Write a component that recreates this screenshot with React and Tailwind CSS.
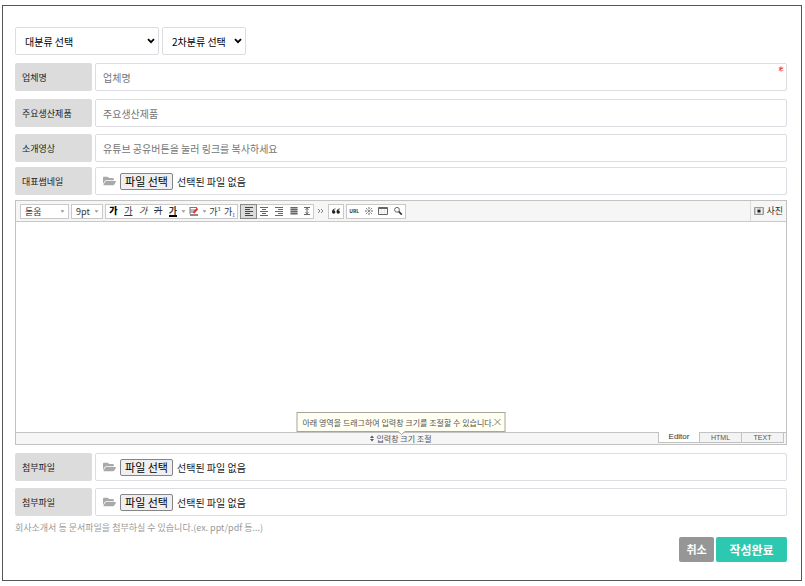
import React from "react";

function Caret() {
  return (
    <svg viewBox="0 0 5 3" className="h-[3px] w-[5px] shrink-0" aria-hidden="true">
      <path d="M0.5 0.3h4L2.5 2.7z" fill="#999" />
    </svg>
  );
}

function FolderIcon() {
  return (
    <svg viewBox="0 0 576 512" className="h-3 w-[13px] shrink-0" aria-hidden="true">
      <path
        fill="#a9a9a9"
        d="M572.7 292.1 500.3 416.200A64 64 0 0 1 445 448H45c-18.500 0-30-20-20.700-36.100l72.400-124.100A64 64 0 0 1 152 256h400c18.500 0 30 20.100 20.700 36.100zM152 224h328v-48c0-26.500-21.500-48-48-48H272l-64-64H48C21.500 64 0 85.500 0 112v278.100l69.100-118.400C86.200 242.300 118 224 152 224z"
      />
    </svg>
  );
}

function CategorySelect({ label, value, className }) {
  return (
    <div className={`grid h-7 items-center rounded-[2px] border border-[#dcdce2] bg-white ${className}`}>
      <select aria-label={label} className="col-start-1 row-start-1 h-full w-full appearance-none bg-transparent pl-[9px] text-[10px] text-black">
        <option>{value}</option>
      </select>
      <svg viewBox="0 0 8 6" className="pointer-events-none col-start-1 row-start-1 mr-[3px] h-[6px] w-2 justify-self-end" aria-hidden="true">
        <path d="m1 1.200 3 3 3-3" fill="none" stroke="#000" strokeWidth="1.800" />
      </svg>
    </div>
  );
}

function Row({ id, label, className, children }) {
  return (
    <div className={`flex h-7 gap-[3px] ${className}`}>
      <label htmlFor={id} className="flex w-[77px] shrink-0 items-center rounded-[2px] bg-[#dcdcdc] px-[7px] pt-0.5 text-[9px] text-[#222]">
        {label}
      </label>
      {children}
    </div>
  );
}

function TextField({ id, label, placeholder, required, className }) {
  return (
    <Row id={id} label={label} className={className}>
      <div className="relative flex min-w-0 flex-1">
        <input
          id={id}
          type="text"
          required={required}
          placeholder={placeholder}
          className="w-full rounded-[2px] border border-[#dcdce2] px-[7px] text-[10px] placeholder:text-[#757575]"
        />
        {required && (
          <svg viewBox="0 0 6 6" className="absolute top-[3px] right-[3px] size-[6px]" aria-hidden="true">
            <path d="M3 0.500v5M0.800 1.600l4.400 2.800M0.800 4.400l4.400-2.800" stroke="#ff3b3b" strokeWidth="1.100" />
          </svg>
        )}
      </div>
    </Row>
  );
}

function FileField({ id, label, className }) {
  return (
    <Row id={id} label={label} className={className}>
      <div className="relative flex min-w-0 flex-1 items-center rounded-[2px] border border-[#dcdce2] pl-[7px]">
        <FolderIcon />
        <input id={id} type="file" className="sr-only" />
        <label
          htmlFor={id}
          className="ml-1 flex h-[17px] w-[53px] items-center justify-center rounded-[2px] border border-[#858585] bg-[#efefef] text-[11px] whitespace-nowrap text-black"
        >
          파일 선택
        </label>
        <span className="ml-1 text-[10px] text-[#222]">선택된 파일 없음</span>
      </div>
    </Row>
  );
}

function Tool({ label, className = "w-[15px]", children }) {
  return (
    <button type="button" aria-label={label} className={`flex h-full items-center justify-center ${className}`}>
      {children}
    </button>
  );
}

function ToolGroup({ className = "", children }) {
  return <div className={`flex h-[15px] shrink-0 items-center border border-[#c9c9c9] bg-white ${className}`}>{children}</div>;
}

function Icon({ children }) {
  return (
    <svg viewBox="0 0 10 10" className="size-[10px] shrink-0" fill="none" stroke="#666" aria-hidden="true">
      {children}
    </svg>
  );
}

function ToolSelect({ label, value, className }) {
  return (
    <div className={`grid h-[15px] shrink-0 items-center border border-[#c9c9c9] bg-white ${className}`}>
      <select aria-label={label} className="col-start-1 row-start-1 h-full w-full appearance-none bg-transparent pl-1 text-[9px] leading-[13px] text-[#333]">
        <option>{value}</option>
      </select>
      <span className="pointer-events-none col-start-1 row-start-1 mr-[3px] justify-self-end">
        <Caret />
      </span>
    </div>
  );
}

function Toolbar() {
  return (
    <div className="flex h-[21px] items-center border-b border-[#c9c9c9] bg-[#f6f6f6] pl-1 text-[9px] text-[#333]">
      <ToolSelect label="글꼴" value="돋움" className="w-[49px]" />
      <ToolSelect label="글자 크기" value="9pt" className="ml-0.5 w-8" />
      <ToolGroup className="ml-0.5 w-[133px]">
        <Tool label="굵게"><b className="font-black text-black">가</b></Tool>
        <Tool label="밑줄"><span className="underline underline-offset-1">가</span></Tool>
        <Tool label="기울임"><i>가</i></Tool>
        <Tool label="취소선"><s>가</s></Tool>
        <Tool label="글자색"><span className="h-[11px] border-b-2 border-black leading-[10px] font-bold">가</span></Tool>
        <Tool label="글자색 목록" className="w-1.5"><Caret /></Tool>
        <Tool label="배경색">
          <Icon>
            <path d="M1 1.500h7M1 4h5M1 6h4M1 1v7" stroke="#777" />
            <path d="M8.500 2.500 4.500 7" stroke="#d33" strokeWidth="2" />
            <path d="M1 9h8" stroke="#7a5c48" strokeWidth="1.500" />
          </Icon>
        </Tool>
        <Tool label="배경색 목록" className="w-1.5"><Caret /></Tool>
        <Tool label="위첨자">
          <span className="flex leading-[13px]">가<span className="text-[5px] leading-[8px]">3</span></span>
        </Tool>
        <Tool label="아래첨자">
          <span className="flex items-end leading-[13px]">가<span className="text-[5px] leading-[6px]">1</span></span>
        </Tool>
      </ToolGroup>
      <ToolGroup className="ml-0.5 w-[74px]">
        <Tool label="왼쪽 정렬" className="w-[15px] bg-[#dcdcdc] outline outline-[#888]">
          <Icon><path d="M1 1.500h8M1 3.500h5M1 5.500h8M1 7.500h5M1 9.500h8" stroke="#444" /></Icon>
        </Tool>
        <Tool label="가운데 정렬">
          <Icon><path d="M1 1.500h8M3 3.500h4M1 5.500h8M3 7.500h4M1 9.500h8" /></Icon>
        </Tool>
        <Tool label="오른쪽 정렬">
          <Icon><path d="M1 1.500h8M4 3.500h5M1 5.500h8M4 7.500h5M1 9.500h8" /></Icon>
        </Tool>
        <Tool label="양쪽 정렬">
          <Icon>
            <path d="M1.500 1h7v8h-7z" fill="#aaa" stroke="none" />
            <path d="M1.500 1.500h7M1.500 3.500h7M1.500 5.500h7M1.500 7.500h7" />
          </Icon>
        </Tool>
        <Tool label="줄간격" className="w-3">
          <Icon><path d="M2 1.500h6M2 8.500h6M5 2v6M3.500 3.800 5 2.300l1.500 1.500M3.500 6.200 5 7.700l1.500-1.500" /></Icon>
        </Tool>
      </ToolGroup>
      <Tool label="더보기" className="w-[14px]">
        <Icon><path d="m2 3 2 2-2 2M5 3l2 2-2 2" stroke="#777" strokeWidth="0.900" /></Icon>
      </Tool>
      <ToolGroup className="w-4">
        <Tool label="인용구">
          <Icon>
            <path d="M4.500 2.500C2.500 2.500 1 4 1 6a1.700 1.700 0 1 0 1.700-1.700c.2-.6.900-1 1.800-1zM9 2.500C7 2.500 5.500 4 5.500 6a1.700 1.700 0 1 0 1.700-1.700c.2-.6.900-1 1.800-1z" fill="#222" stroke="none" />
          </Icon>
        </Tool>
      </ToolGroup>
      <ToolGroup className="ml-0.5 w-[60px]">
        <Tool label="링크"><span className="text-[5px] font-bold">URL</span></Tool>
        <Tool label="특수문자">
          <Icon>
            <path d="M5 1v2M5 7v2M1 5h2M7 5h2M2.200 2.200l1.300 1.300M6.500 6.500l1.300 1.300M2.200 7.800l1.300-1.300M6.500 3.500l1.300-1.300" />
            <circle cx="5" cy="5" r="0.800" />
          </Icon>
        </Tool>
        <Tool label="표">
          <Icon><path d="M0.500 1.500h9v7h-9zM0.500 2.500h9" /><path d="M1 4.700h8M1 6.600h8M3.500 3v5M6.500 3v5" stroke="#ddd" strokeWidth="0.500" /></Icon>
        </Tool>
        <Tool label="찾기">
          <Icon><circle cx="4" cy="3.800" r="2.400" /><path d="m5.800 5.600 3 3" stroke="#333" strokeWidth="1.600" /></Icon>
        </Tool>
      </ToolGroup>
      <button type="button" className="ml-auto flex h-full items-center gap-0.5 border-l border-[#dcdcdc] px-[3px] whitespace-nowrap">
        <svg viewBox="0 0 10 8" className="h-2 w-[10px]" aria-hidden="true">
          <path d="M0.500 0.500h9v7h-9z" fill="#ccc" stroke="#999" />
          <path d="M2.500 1v6M7.500 1v6" stroke="#eee" />
          <circle cx="5" cy="4" r="1.600" fill="#222" />
        </svg>
        사진
      </button>
    </div>
  );
}

function Editor() {
  return (
    <section className="mt-[5px] border border-[#c2c2c2]">
      <Toolbar />
      <div className="h-[210px]">
        <textarea aria-label="내용" className="block h-full w-full resize-none p-2 text-[10px] outline-none" />
      </div>
      <div className="relative grid h-3 grid-cols-[1fr_auto_1fr] border-t border-[#c2c2c2] bg-[#f6f6f6] text-[8px] leading-[11px] text-[#555]">
        <div className="absolute bottom-3 left-1/2 flex h-5 w-[209px] -translate-x-1/2 items-center justify-between border border-[#a8a69a] bg-[#fffff2] pr-[3px] pl-[5px] whitespace-nowrap">
          <span>아래 영역을 드래그하여 입력창 크기를 조절할 수 있습니다.</span>
          <button type="button" aria-label="닫기">
            <svg viewBox="0 0 8 8" className="size-2" aria-hidden="true">
              <path d="m1 1 6 6M7 1 1 7" stroke="#777" strokeWidth="0.900" />
            </svg>
          </button>
          <svg viewBox="0 0 8 4" className="absolute top-full left-1/2 h-1 w-2 -translate-x-1/2" aria-hidden="true">
            <path d="M0 0 4 3.500 8 0" fill="#fffff2" stroke="#a8a69a" />
          </svg>
        </div>
        <button type="button" className="col-start-2 flex items-center gap-0.5 whitespace-nowrap">
          <svg viewBox="0 0 4 7" className="h-[7px] w-1" aria-hidden="true">
            <path d="M0 3 2 0.500 4 3zM0 4 2 6.500 4 4z" fill="#555" />
          </svg>
          입력창 크기 조절
        </button>
        <div className="-mt-px mr-0.5 flex h-[11px] justify-self-end font-['Liberation_Sans',sans-serif] leading-[10px]">
          <button type="button" className="w-[42px] border-x border-b border-[#c2c2c2] bg-white text-[#333]">Editor</button>
          <button type="button" className="w-[42px] border-y border-r border-[#c2c2c2] bg-[#f3f3f3] text-[7px] leading-[9px]">HTML</button>
          <button type="button" className="w-[42px] border-y border-r border-[#c2c2c2] bg-[#f3f3f3] text-[7px] leading-[9px]">TEXT</button>
        </div>
      </div>
    </section>
  );
}

export default function App() {
  return (
    <main className="pt-[5px] pr-[3px] pb-[5px] pl-0.5 font-['Noto_Sans_CJK_KR',sans-serif]">
      <form className="border border-[#555] bg-white pt-[21px] pr-[14px] pb-[18px] pl-3" onSubmit={(e) => e.preventDefault()}>
        <div className="flex gap-[3px]">
          <CategorySelect label="대분류" value="대분류 선택" className="w-36" />
          <CategorySelect label="2차분류" value="2차분류 선택" className="w-[84px]" />
        </div>
        <TextField id="company" label="업체명" placeholder="업체명" required className="mt-2" />
        <TextField id="product" label="주요생산제품" placeholder="주요생산제품" className="mt-2" />
        <TextField id="video" label="소개영상" placeholder="유튜브 공유버튼을 눌러 링크를 복사하세요" className="mt-[7px]" />
        <FileField id="thumbnail" label="대표썸네일" className="mt-[5px]" />
        <Editor />
        <FileField id="file1" label="첨부파일" className="mt-2" />
        <FileField id="file2" label="첨부파일" className="mt-[7px]" />
        <p className="mt-1 text-[9px] leading-4 text-[#999]">회사소개서 등 문서파일을 첨부하실 수 있습니다.(ex. ppt/pdf 등...)</p>
        <div className="mt-px flex justify-end gap-0.5 font-bold text-white">
          <button type="button" className="h-[25px] w-[35px] rounded-[2px] bg-[#969696] text-[11px]">취소</button>
          <button type="submit" className="h-[25px] w-[71px] rounded-[2px] bg-[#2cc9b0] text-[12px]">작성완료</button>
        </div>
      </form>
    </main>
  );
}
